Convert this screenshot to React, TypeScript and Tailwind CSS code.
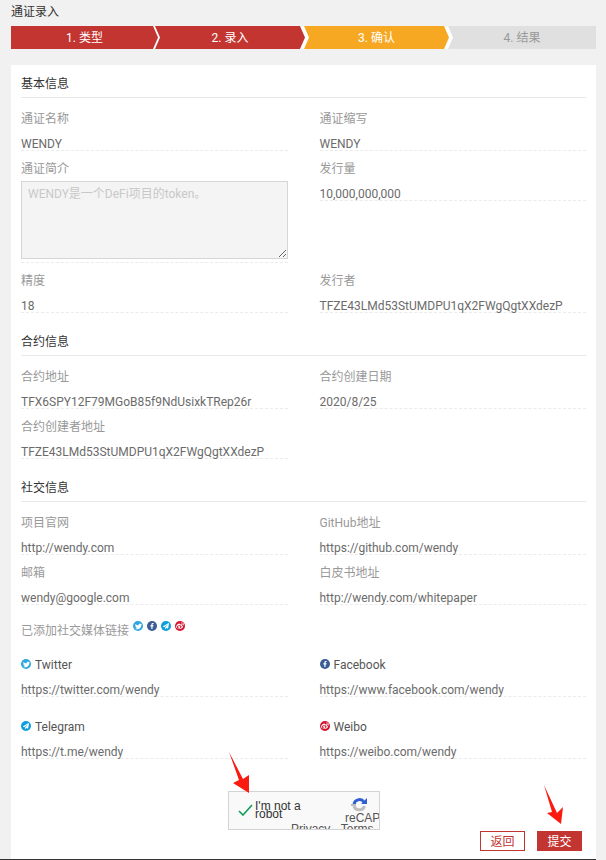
import React from "react";
import { FaTwitter, FaFacebookF, FaPaperPlane, FaWeibo } from "react-icons/fa";

const FONT = "font-['Roboto','Noto_Sans_CJK_SC',sans-serif]";

function Field({ label, value }: { label: string; value?: string }) {
  return (
    <div>
      <div className="h-[20px] pt-px text-[12px] leading-[20px] text-[#999999]">{label}</div>
      {value !== undefined && <Value>{value}</Value>}
    </div>
  );
}

function Value({ children }: { children: React.ReactNode }) {
  return (
    <div className="h-[23px] whitespace-nowrap border-b border-dashed border-[#ebebeb] pt-[8px] text-[12px] leading-[16px] text-[#6b6b6b]">
      {children}
    </div>
  );
}

function SectionTitle({ children }: { children: React.ReactNode }) {
  return (
    <div className="mb-[10px] h-[25px] border-b border-[#e8e8e8] pt-px text-[12px] leading-[20px] text-[#333333]">
      {children}
    </div>
  );
}

const socials = {
  twitter: { bg: "bg-[#2ea7e0]", icon: <FaTwitter size={7} color="#fff" /> },
  facebook: { bg: "bg-[#3b5c94]", icon: <FaFacebookF size={6} color="#fff" /> },
  telegram: { bg: "bg-[#0d9fdc]", icon: <FaPaperPlane size={6} color="#fff" /> },
  weibo: { bg: "bg-[#d5122f]", icon: <FaWeibo size={8} color="#fff" /> },
};

function SocialIcon({ kind }: { kind: keyof typeof socials }) {
  const s = socials[kind];
  return (
    <span className={`flex h-[10px] w-[10px] shrink-0 items-center justify-center rounded-full ${s.bg}`}>
      {s.icon}
    </span>
  );
}

function SocialField({ kind, name, value }: { kind: keyof typeof socials; name: string; value: string }) {
  return (
    <div>
      <div className="flex h-[20px] items-center gap-[4px] text-[12px] leading-[20px] text-[#555555]">
        <SocialIcon kind={kind} />
        <span className="pt-px">{name}</span>
      </div>
      <Value>{value}</Value>
    </div>
  );
}

function Arrow({ className, points, width, height }: { className: string; points: string; width: number; height: number }) {
  return (
    <svg className={className} width={width} height={height} viewBox={`0 0 ${width} ${height}`}>
      <polygon points={points} fill="#fb1a10" />
    </svg>
  );
}

export default function App() {
  return (
    <div className={`relative h-[860px] w-[606px] overflow-hidden bg-[#f1f1f1] pt-px ${FONT}`}>
      <div className="ml-[11px] h-[20px] pt-px text-[12px] leading-[20px] text-[#333333]">通证录入</div>

      <div className="ml-[11px] mt-[5px] flex h-[23px] w-[585px] bg-white text-[12px] leading-[24px]">
        <div className="w-[147px] bg-[#c23531] text-center text-white [clip-path:polygon(0_0,142px_0,147px_50%,142px_100%,0_100%)]">
          1. 类型
        </div>
        <div className="-ml-[3px] w-[150px] bg-[#c23531] text-center text-white [clip-path:polygon(0_0,145px_0,150px_50%,145px_100%,0_100%,5px_50%)]">
          2. 录入
        </div>
        <div className="-ml-[1px] w-[145px] bg-[#f7a823] text-center text-white [clip-path:polygon(0_0,140px_0,145px_50%,140px_100%,0_100%,5px_50%)]">
          3. 确认
        </div>
        <div className="-ml-[1px] w-[148px] bg-[#e0e0e0] text-center text-[#999999] [clip-path:polygon(0_0,100%_0,100%_100%,0_100%,5px_50%)]">
          4. 结果
        </div>
      </div>

      <div className="ml-[11px] mt-[16px] h-[794px] w-[585px] bg-white px-[10px] pt-[8px]">
        <SectionTitle>基本信息</SectionTitle>
        <div className="grid grid-cols-2 gap-x-[32px] gap-y-[7px]">
          <Field label="通证名称" value="WENDY" />
          <Field label="通证缩写" value="WENDY" />
          <div>
            <Field label="通证简介" />
            <div className="h-[85px] border-b border-dashed border-[#ebebeb] pt-[3px]">
              <textarea
                readOnly
                value="WENDY是一个DeFi项目的token。"
                className="block h-[78px] w-full border border-[#d6d6d6] bg-[#f4f4f4] px-[6px] py-[4px] text-[12px] leading-[16px] text-[#c8c8c8] outline-none"
              />
            </div>
          </div>
          <Field label="发行量" value="10,000,000,000" />
          <Field label="精度" value="18" />
          <Field label="发行者" value="TFZE43LMd53StUMDPU1qX2FWgQgtXXdezP" />
        </div>

        <div className="mt-[18px]">
          <SectionTitle>合约信息</SectionTitle>
          <div className="grid grid-cols-2 gap-x-[32px] gap-y-[7px]">
            <Field label="合约地址" value="TFX6SPY12F79MGoB85f9NdUsixkTRep26r" />
            <Field label="合约创建日期" value="2020/8/25" />
            <Field label="合约创建者地址" value="TFZE43LMd53StUMDPU1qX2FWgQgtXXdezP" />
          </div>
        </div>

        <div className="mt-[18px]">
          <SectionTitle>社交信息</SectionTitle>
          <div className="grid grid-cols-2 gap-x-[32px] gap-y-[7px]">
            <Field label="项目官网" value="http://wendy.com" />
            <Field label="GitHub地址" value="https://github.com/wendy" />
            <Field label="邮箱" value="wendy@google.com" />
            <Field label="白皮书地址" value="http://wendy.com/whitepaper" />
          </div>

          <div className="mt-[15px] flex h-[20px] items-start text-[12px] leading-[20px] text-[#999999]">
            <span className="pt-px">已添加社交媒体链接</span>
            <div className="ml-[4px] mt-px flex gap-[4px]">
              <SocialIcon kind="twitter" />
              <SocialIcon kind="facebook" />
              <SocialIcon kind="telegram" />
              <SocialIcon kind="weibo" />
            </div>
          </div>

          <div className="mt-[14px] grid grid-cols-2 gap-x-[32px] gap-y-[19px]">
            <SocialField kind="twitter" name="Twitter" value="https://twitter.com/wendy" />
            <SocialField kind="facebook" name="Facebook" value="https://www.facebook.com/wendy" />
            <SocialField kind="telegram" name="Telegram" value="https://t.me/wendy" />
            <SocialField kind="weibo" name="Weibo" value="https://weibo.com/wendy" />
          </div>
        </div>

        <div className="ml-[207px] mt-[32px] flex h-[39px] w-[152px] overflow-hidden border border-[#d3d3d3] bg-[#f9f9f9] font-['Liberation_Sans',sans-serif] text-[#333333]">
          <div className="flex w-[62px] shrink-0 items-start">
            <svg className="ml-[9px] mt-[11px] shrink-0" width="15" height="13" viewBox="0 0 15 13">
              <polyline points="1,8 5,12 14,2" fill="none" stroke="#0f9d58" strokeWidth="1.6" />
            </svg>
            <div className="ml-[2px] mt-[10px] whitespace-nowrap text-[12px] leading-[8px]">
              I'm not a
              <br />
              robot
            </div>
          </div>
          <div className="min-w-0 flex-1 whitespace-nowrap text-[#555555]">
            <svg className="ml-[60px] mt-[5px] block" width="17" height="16" viewBox="0 0 17 16">
              <path d="M3 8a5.5 5.500 0 0 1 10-3" fill="none" stroke="#2f5fd0" strokeWidth="3" />
              <path d="M10 7h6V1z" fill="#2f5fd0" />
              <path d="M13.500 9a5.500 5.500 0 0 1-10.500 0" fill="none" stroke="#bdbdbd" strokeWidth="3" />
              <path d="M0 7h5v2H0z" fill="#bdbdbd" />
            </svg>
            <div className="ml-[54px] h-[9px] text-[12px] leading-[11px]">reCAPTCHA</div>
            <div className="text-[12px] leading-[14px]">Privacy - Terms</div>
          </div>
        </div>

        <div className="mr-[4px] mt-px flex justify-end gap-[12px] text-[12px]">
          <div className="h-[20px] w-[45px] border border-[#c23531] bg-white text-center leading-[20px] text-[#c23531]">返回</div>
          <div className="h-[20px] w-[45px] bg-[#c23531] text-center leading-[22px] text-white">提交</div>
        </div>
      </div>

      <div className="h-px w-[596px] bg-[#333333]" />

      <Arrow className="absolute left-[229px] top-[752px]" width={21} height={42} points="0,0 14,27 20,23 20,41 4,31 10,28" />
      <Arrow className="absolute left-[544px] top-[785px]" width={20} height={40} points="0,0 13,28 19,22 17,39 3,28 8,27" />
    </div>
  );
}
